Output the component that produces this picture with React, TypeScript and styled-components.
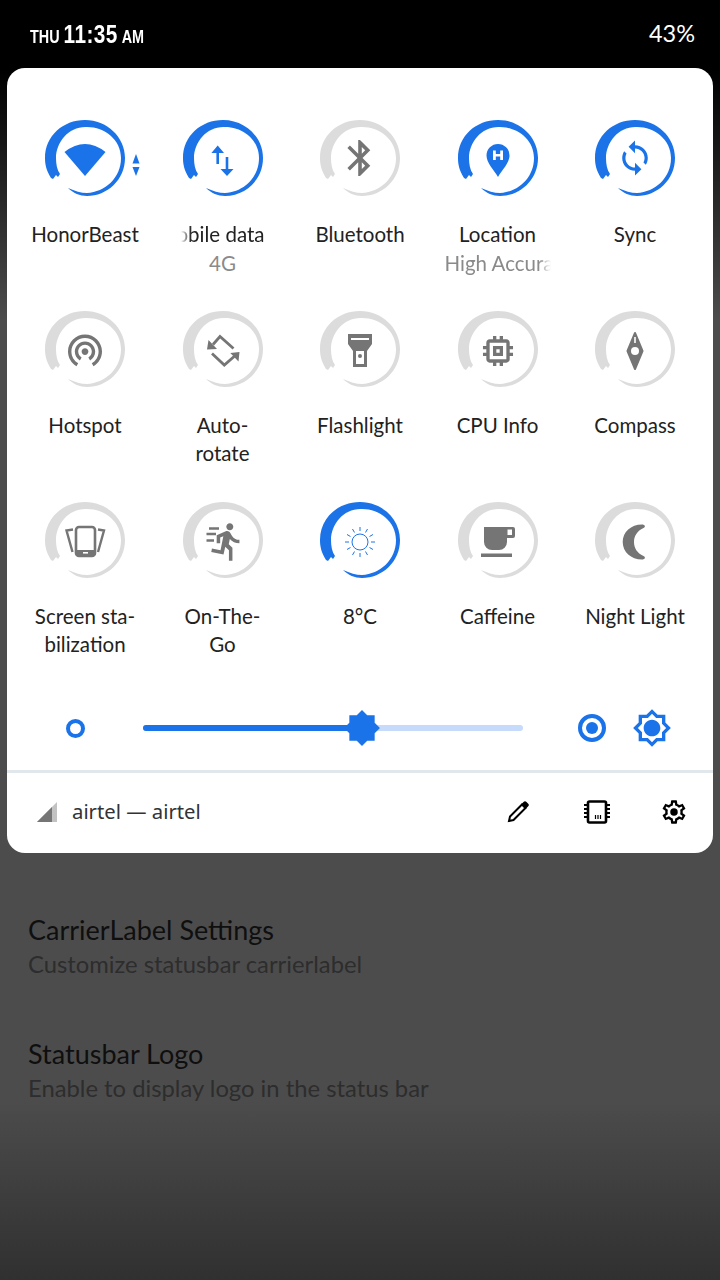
import React from 'react'
import styled, { createGlobalStyle } from 'styled-components'

const BLUE = '#1a73e8'
const GREY = '#757575'
const RING_OFF = '#dcdcdc'

const GlobalStyle = createGlobalStyle`
  html, body {
    margin: 0;
    padding: 0;
    background: #000;
  }
`

const Screen = styled.div`
  width: 720px;
  height: 1280px;
  overflow: hidden;
  display: flex;
  flex-direction: column;
  font-family: Lato, "Open Sans", sans-serif;
  background: linear-gradient(
    to bottom,
    #000 0,
    #000 70px,
    #4c4c4c 320px,
    #4c4c4c 1100px,
    #303030 1280px
  );
`

const StatusBar = styled.div`
  height: 68px;
  flex: none;
  display: flex;
  align-items: center;
  justify-content: space-between;
  padding: 0 25px 0 30px;
  box-sizing: border-box;
  color: #fff;
`

const Clock = styled.div`
  display: flex;
  align-items: baseline;
  gap: 5px;
  font-family: "Liberation Sans", sans-serif;
  font-weight: 700;
  font-size: 18px;
  transform: scaleX(0.8);
  transform-origin: left center;
`

const ClockTime = styled.span`
  font-size: 26px;
  letter-spacing: 0.5px;
`

const Battery = styled.div`
  font-size: 23.5px;
  font-weight: 400;
  margin-top: -3px;
`

const Panel = styled.div`
  flex: none;
  margin: 0 7px;
  height: 785px;
  background: #fff;
  border-radius: 18px;
  display: flex;
  flex-direction: column;
`

const TileGrid = styled.div`
  display: grid;
  grid-template-columns: repeat(5, 137.5px);
  grid-auto-rows: 191px;
  padding: 52px 9.25px 0;
`

const Tile = styled.div`
  display: flex;
  flex-direction: column;
  align-items: center;
`

const RingSvg = styled.svg`
  width: 80px;
  height: 76px;
  flex: none;
  overflow: visible;
  margin-bottom: 24px;
`

const Label = styled.div`
  font-size: 20.5px;
  line-height: 28px;
  color: #222;
  text-align: center;
  white-space: nowrap;
`

const SubLabel = styled(Label)`
  color: #8a8a8a;
  margin-top: 1px;
`

const Clipped = styled.div<{ $side: 'left' | 'right'; $width: number }>`
  width: ${p => p.$width}px;
  overflow: hidden;
  display: flex;
  flex: none;
  justify-content: ${p => (p.$side === 'left' ? 'flex-end' : 'flex-start')};
  -webkit-mask-image: linear-gradient(
    to ${p => p.$side},
    #000 88%,
    transparent 100%
  );
  mask-image: linear-gradient(to ${p => p.$side}, #000 88%, transparent 100%);
`

const SliderRow = styled.div`
  display: flex;
  align-items: center;
  height: 70px;
  padding: 0 0 7px 59px;
`

const MinDot = styled.div`
  width: 19px;
  height: 19px;
  box-sizing: border-box;
  border: 4px solid ${BLUE};
  border-radius: 50%;
  flex: none;
`

const Track = styled.div`
  position: relative;
  width: 380px;
  height: 6px;
  margin: 0 55px 0 58px;
  border-radius: 3px;
  background: #c6dafc;
  flex: none;
`

const TrackFill = styled.div`
  height: 100%;
  border-radius: 3px;
  background: ${BLUE};
`

const Thumb = styled.svg`
  position: absolute;
  top: -16px;
  width: 38px;
  height: 38px;
  margin-left: -19px;
`

const SliderIcon = styled.svg<{ $size: number; $gap?: number }>`
  width: ${p => p.$size}px;
  height: ${p => p.$size}px;
  margin-left: ${p => p.$gap ?? 0}px;
  flex: none;
`

const Divider = styled.div`
  height: 3px;
  background: #e2e7eb;
  flex: none;
`

const Footer = styled.div`
  flex: 1;
  display: flex;
  align-items: center;
  padding: 0 25px 2px 30px;
`

const Carrier = styled.span`
  margin-left: 15px;
  padding-bottom: 3px;
  font-family: "Noto Sans", sans-serif;
  font-size: 20.3px;
  color: #333;
`

const FooterActions = styled.div`
  margin-left: auto;
  display: flex;
  align-items: center;
  gap: 50px;
`

const PencilSvg = styled.svg`
  width: 22px;
  height: 22px;
  margin-right: 5px;
`

const Backdrop = styled.div`
  padding: 59px 28px 0;
  display: flex;
  flex-direction: column;
  gap: 54px;
`

const Pref = styled.div`
  display: flex;
  flex-direction: column;
`

const PrefTitle = styled.div`
  font-size: 27px;
  line-height: 35px;
  color: #0f0f0f;
`

const PrefSummary = styled.div`
  font-size: 23.8px;
  line-height: 35px;
  color: #2d2d2d;
`

const HiddenDefs = styled.svg`
  width: 0;
  height: 0;
  flex: none;
`

const BrushRing = ({ color }: { color: string }) => (
  <g filter="url(#brush)">
    <path
      fill={color}
      d="M6 58C1 50 0 44 0 38C0 16 18 0 40 0C62 0 80 17 80 38C80 60 62 76 42 76C35 76 28 73 23 68C30 71 36 73 42 73C60 72 76 58 76 38C76 20 60 7 42 7C24 6 11 22 11 38C11 44 12 50 15 54L13 57L11 55L8 59Z"
    />
  </g>
)

// material glyph on a 24 unit box, centred in the ring
const Glyph = ({
  d,
  scale,
  color = GREY,
  cx = 12,
  cy = 12,
  x = 40,
  y = 40,
}: {
  d: string
  scale: number
  color?: string
  cx?: number
  cy?: number
  x?: number
  y?: number
}) => (
  <path
    d={d}
    fill={color}
    transform={`translate(${x} ${y}) scale(${scale}) translate(${-cx} ${-cy})`}
  />
)

const WifiIcon = () => (
  <>
    <path fill={BLUE} d="M19.5 32Q40 16 60.5 32L40 56Z" />
    <path fill={BLUE} d="M91 34L94.5 43.5H87.5ZM87.5 47H94.5L91 56Z" />
  </>
)

const DataIcon = () => (
  <g stroke={BLUE} strokeWidth="2.6" fill="none">
    <path d="M34.7 28V44" />
    <path d="M44 37V53" />
    <path fill={BLUE} stroke="none" d="M34.7 25.5L41 33H28.4ZM44 56L50.5 49H37.5Z" />
  </g>
)

const BluetoothIcon = () => (
  <Glyph
    scale={1.8}
    y={38}
    d="M17.71 7.71L12 2h-1v7.59L6.41 5 5 6.41 10.59 12 5 17.59 6.41 19 11 14.41V22h1l5.71-5.71-4.3-4.29 4.3-4.29zM13 5.83l1.88 1.88L13 9.59V5.83zm1.88 10.46L13 18.17v-3.76l1.88 1.88z"
  />
)

const LocationIcon = () => (
  <>
    <path
      fill={BLUE}
      d="M40 57C36 50 28.5 43 28.5 35.5A11.5 11.5 0 0 1 51.5 35.5C51.5 43 44 50 40 57Z"
    />
    <path fill="#fff" d="M35 30.5H37.8V34H42.2V30.5H45V40H42.2V36.5H37.8V40H35Z" />
  </>
)

const SyncIcon = () => (
  <Glyph
    scale={1.6}
    color={BLUE}
    y={38}
    d="M12 4V1L8 5l4 4V6c3.31 0 6 2.69 6 6 0 1.01-.25 1.97-.7 2.8l1.46 1.46C19.54 15.03 20 13.57 20 12c0-4.42-3.58-8-8-8zm0 14c-3.31 0-6-2.69-6-6 0-1.01.25-1.97.7-2.8L5.24 7.74C4.46 8.97 4 10.43 4 12c0 4.42 3.58 8 8 8v3l4-4-4-4v3z"
  />
)

const HotspotIcon = () => (
  <Glyph
    scale={1.7}
    cy={12.3}
    y={39.4}
    d="M12 11c-1.1 0-2 .9-2 2s.9 2 2 2 2-.9 2-2-.9-2-2-2zm6 2c0-3.31-2.69-6-6-6s-6 2.69-6 6c0 2.22 1.21 4.15 3 5.19l1-1.74c-1.19-.7-2-1.97-2-3.45 0-2.21 1.79-4 4-4s4 1.79 4 4c0 1.48-.81 2.75-2 3.45l1 1.74c1.79-1.04 3-2.97 3-5.19zM12 3C6.48 3 2 7.48 2 13c0 3.7 2.01 6.92 4.99 8.65l1-1.73C5.61 18.53 4 15.96 4 13c0-4.42 3.58-8 8-8s8 3.58 8 8c0 2.96-1.61 5.53-4 6.92l1 1.73c2.99-1.73 5-4.95 5-8.65 0-5.52-4.48-10-10-10z"
  />
)

const RotateIcon = () => (
  <>
    <path fill="none" stroke={GREY} strokeWidth="2.8" d="M30 33.5L37 25.5L50.5 37.5" />
    <path fill="none" stroke={GREY} strokeWidth="2.8" d="M29 42.5L41.3 54L54 43" />
    <path fill={GREY} d="M24 38.5L25.5 29L34 38ZM56.5 41L55.5 50.5L47.3 42Z" />
  </>
)

const FlashlightIcon = () => (
  <path
    fill={GREY}
    fillRule="evenodd"
    d="M28 23H52V33L47 40V56H33V40L28 33ZM31 27V29H49V27ZM36 40V53H44V40ZM38 45a2 2 0 1 0 4 0a2 2 0 1 0 -4 0Z"
  />
)

const CpuIcon = () => (
  <Glyph
    scale={1.67}
    d="M15 9H9v6h6V9zm-2 4h-2v-2h2v2zm8-2V9h-2V7c0-1.1-.9-2-2-2h-2V3h-2v2h-2V3H9v2H7c-1.1 0-2 .9-2 2v2H3v2h2v2H3v2h2v2c0 1.1.9 2 2 2h2v2h2v-2h2v2h2v-2h2c1.1 0 2-.9 2-2v-2h2v-2h-2v-2h2zm-4 6H7V7h10v10z"
  />
)

const CompassIcon = () => (
  <>
    <path
      fill={GREY}
      stroke={GREY}
      strokeWidth="2"
      strokeLinejoin="round"
      d="M40 22L47.5 40L40 58L32.5 40Z"
    />
    <circle cx="40" cy="40" r="4" fill="#fff" />
    <path stroke="#fff" strokeWidth="1.6" d="M40 26V32" />
  </>
)

const StabilizeIcon = () => (
  <>
    <rect x="31" y="25" width="19" height="29" rx="3" fill="none" stroke={GREY} strokeWidth="2.6" />
    <rect x="31" y="48" width="19" height="6" fill={GREY} />
    <rect x="38" y="50" width="5" height="1.6" fill="#fff" />
    <path
      fill="none"
      stroke={GREY}
      strokeWidth="2.4"
      d="M28 27.5L21.5 28.5L27.5 50M53 27.5L59 28.5L53 50"
    />
  </>
)

const RunIcon = () => (
  <>
    <Glyph
      scale={1.75}
      cx={11.6}
      cy={12.2}
      x={43.5}
      y={40}
      d="M13.49 5.48c1.1 0 2-.9 2-2s-.9-2-2-2-2 .9-2 2 .9 2 2 2zm-3.6 13.9l1-4.4 2.1 2v6h2v-7.5l-2.1-2 .6-3c1.3 1.5 3.3 2.5 5.5 2.5v-2c-1.9 0-3.5-1-4.3-2.4l-1-1.6c-.4-.6-1-1-1.7-1-.3 0-.5.1-.8.1l-5.2 2.2v4.7h2v-3.4l1.8-.7-1.6 8.1-4.9-1-.4 2 7 1.4z"
    />
    <path stroke={GREY} strokeWidth="2.4" d="M26 26.5H36M23.5 32H33M23.5 38.5H31" />
  </>
)

const SunIcon = () => (
  <g stroke={BLUE} strokeWidth="1" fill="none">
    <circle cx="40" cy="40" r="8" />
    {Array.from({ length: 12 }, (_, i) => {
      const a = (i * Math.PI) / 6
      return (
        <line
          key={i}
          x1={40 + Math.cos(a) * 11}
          y1={40 + Math.sin(a) * 11}
          x2={40 + Math.cos(a) * 15}
          y2={40 + Math.sin(a) * 15}
        />
      )
    })}
  </g>
)

const CoffeeIcon = () => (
  <path
    fill={GREY}
    fillRule="evenodd"
    d="M26 25H55A2 2 0 0 1 57 27V34A2 2 0 0 1 55 36H49V40A8 8 0 0 1 41 48H34A8 8 0 0 1 26 40ZM49.5 27.5V33H54V27.5ZM23 51.5H54V55H23Z"
  />
)

const MoonIcon = () => (
  <path
    fill={GREY}
    d="M47 22.5C50 22.5 51 25 48.5 26C42 29 39 34 39 40C39 46 42 51 48.5 54C51 55 50 57.5 47 57.5C36 57.5 27.7 50 27.7 40C27.7 30 36 22.5 47 22.5Z"
  />
)

type TileData = {
  id: string
  on: boolean
  icon: React.ReactNode
  lines: string[]
  clipWidth?: number
  sub?: string
  subClipWidth?: number
}

const tiles: TileData[] = [
  { id: 'wifi', on: true, icon: <WifiIcon />, lines: ['HonorBeast'] },
  { id: 'data', on: true, icon: <DataIcon />, lines: ['Mobile data'], clipWidth: 84, sub: '4G' },
  { id: 'bt', on: false, icon: <BluetoothIcon />, lines: ['Bluetooth'] },
  { id: 'loc', on: true, icon: <LocationIcon />, lines: ['Location'], sub: 'High Accuracy', subClipWidth: 106 },
  { id: 'sync', on: true, icon: <SyncIcon />, lines: ['Sync'] },
  { id: 'hotspot', on: false, icon: <HotspotIcon />, lines: ['Hotspot'] },
  { id: 'rotate', on: false, icon: <RotateIcon />, lines: ['Auto-', 'rotate'] },
  { id: 'flash', on: false, icon: <FlashlightIcon />, lines: ['Flashlight'] },
  { id: 'cpu', on: false, icon: <CpuIcon />, lines: ['CPU Info'] },
  { id: 'compass', on: false, icon: <CompassIcon />, lines: ['Compass'] },
  { id: 'stab', on: false, icon: <StabilizeIcon />, lines: ['Screen sta-', 'bilization'] },
  { id: 'otg', on: false, icon: <RunIcon />, lines: ['On-The-', 'Go'] },
  { id: 'temp', on: true, icon: <SunIcon />, lines: ['8°C'] },
  { id: 'caffeine', on: false, icon: <CoffeeIcon />, lines: ['Caffeine'] },
  { id: 'night', on: false, icon: <MoonIcon />, lines: ['Night Light'] },
]

const STAR =
  'M20 8.69V4h-4.69L12 .69 8.69 4H4v4.69L.69 12 4 15.31V20h4.69L12 23.31 15.31 20H20v-4.69L23.31 12 20 8.69z'

const GEAR =
  'M19.43 12.98c.04-.32.07-.64.07-.98 0-.34-.03-.66-.07-.98l2.11-1.65c.19-.15.24-.42.12-.64l-2-3.46c-.09-.16-.26-.25-.44-.25-.06 0-.12.01-.17.03l-2.49 1c-.52-.4-1.08-.73-1.69-.98l-.38-2.65C14.46 2.18 14.25 2 14 2h-4c-.25 0-.46.18-.49.42l-.38 2.65c-.61.25-1.17.59-1.69.98l-2.49-1c-.06-.02-.12-.03-.18-.03-.17 0-.34.09-.43.25l-2 3.46c-.13.22-.07.49.12.64l2.11 1.65c-.04.32-.07.65-.07.98 0 .33.03.66.07.98l-2.11 1.65c-.19.15-.24.42-.12.64l2 3.46c.09.16.26.25.44.25.06 0 .12-.01.17-.03l2.49-1c.52.4 1.08.73 1.69.98l.38 2.65c.03.24.24.42.49.42h4c.25 0 .46-.18.49-.42l.38-2.65c.61-.25 1.17-.59 1.69-.98l2.49 1c.06.02.12.03.18.03.17 0 .34-.09.43-.25l2-3.46c.12-.22.07-.49-.12-.64l-2.11-1.65zm-1.98-1.71c.04.31.05.52.05.73 0 .21-.02.43-.05.73l-.14 1.13.89.7 1.08.84-.7 1.21-1.27-.51-1.04-.42-.9.68c-.43.32-.84.56-1.25.73l-1.06.43-.16 1.13-.2 1.35h-1.4l-.19-1.35-.16-1.13-1.06-.43c-.43-.18-.83-.41-1.23-.71l-.91-.7-1.06.43-1.27.51-.7-1.21 1.08-.84.89-.7-.14-1.13c-.03-.31-.05-.54-.05-.74s.02-.43.05-.73l.14-1.13-.89-.7-1.08-.84.7-1.21 1.27.51 1.04.42.9-.68c.43-.32.84-.56 1.25-.73l1.06-.43.16-1.13.2-1.35h1.39l.19 1.35.16 1.13 1.06.43c.43.18.83.41 1.23.71l.91.7 1.06-.43 1.27-.51.7 1.21-1.07.85-.89.7.14 1.13z'

const App: React.FC = () => {
  return (
    <Screen>
      <GlobalStyle />
      <HiddenDefs aria-hidden="true">
        <defs>
          <filter id="brush" x="-5%" y="-5%" width="110%" height="110%">
            <feTurbulence type="fractalNoise" baseFrequency="0.09" numOctaves="2" seed="4" />
            <feDisplacementMap in="SourceGraphic" scale="1.6" />
            <feGaussianBlur stdDeviation="0.25" />
          </filter>
        </defs>
      </HiddenDefs>

      <StatusBar>
        <Clock>
          <span>THU</span>
          <ClockTime>11:35</ClockTime>
          <span>AM</span>
        </Clock>
        <Battery>43%</Battery>
      </StatusBar>

      <Panel>
        <TileGrid>
          {tiles.map(t => (
            <Tile key={t.id}>
              <RingSvg viewBox="0 0 80 76">
                <BrushRing color={t.on ? BLUE : RING_OFF} />
                {t.icon}
              </RingSvg>
              {t.clipWidth ? (
                <Clipped $side="left" $width={t.clipWidth}>
                  <Label>{t.lines[0]}</Label>
                </Clipped>
              ) : (
                t.lines.map(line => <Label key={line}>{line}</Label>)
              )}
              {t.sub && t.subClipWidth && (
                <Clipped $side="right" $width={t.subClipWidth}>
                  <SubLabel>{t.sub}</SubLabel>
                </Clipped>
              )}
              {t.sub && !t.subClipWidth && <SubLabel>{t.sub}</SubLabel>}
            </Tile>
          ))}
        </TileGrid>

        <SliderRow>
          <MinDot />
          <Track>
            <TrackFill style={{ width: `${((360 - 143) / 380) * 100}%` }} />
            <Thumb viewBox="0 0 24 24" style={{ left: `${((362 - 143) / 380) * 100}%` }}>
              <path fill={BLUE} d={STAR} />
            </Thumb>
          </Track>
          <SliderIcon $size={28} viewBox="0 0 28 28">
            <circle cx="14" cy="14" r="12" fill="none" stroke={BLUE} strokeWidth="4" />
            <circle cx="14" cy="14" r="6" fill={BLUE} />
          </SliderIcon>
          <SliderIcon $size={40} $gap={26} viewBox="0 0 24 24">
            <path
              fill={BLUE}
              d={`${STAR}m-2 5.79V18h-3.52L12 20.48 9.52 18H6v-3.52L3.52 12 6 9.52V6h3.52L12 3.52 14.48 6H18v3.52L20.48 12 18 14.48zM12 7c-2.76 0-5 2.24-5 5s2.24 5 5 5 5-2.24 5-5-2.24-5-5-5z`}
            />
          </SliderIcon>
        </SliderRow>

        <Divider />

        <Footer>
          <svg width="20" height="20" viewBox="0 0 20 20">
            <path fill="#c2c2c2" d="M20 0V20H0Z" />
            <path fill={GREY} d="M15 5V20H0Z" />
          </svg>
          <Carrier>airtel — airtel</Carrier>
          <FooterActions>
            <PencilSvg viewBox="0 0 22 22">
              <path fill="none" stroke="#000" strokeWidth="2" d="M2 20L3 15.5L15 3.5L18.5 7L6.5 19Z" />
              <path fill="#000" d="M14 3.5L16.5 1A2 2 0 0 1 19.5 1L21 2.5A2 2 0 0 1 21 5.5L18.5 8Z" />
            </PencilSvg>
            <svg width="26" height="24" viewBox="0 0 26 24">
              <rect x="4" y="1.5" width="18" height="21" rx="1.5" fill="none" stroke="#000" strokeWidth="2.6" />
              <path
                stroke="#000"
                strokeWidth="2"
                d="M0 5H4M0 9H4M0 13H4M0 17H4M22 5H26M22 9H26M22 13H26M22 17H26"
              />
              <path stroke="#000" strokeWidth="1.2" d="M11.5 15V19M14 15V19M16.5 15V19" />
            </svg>
            <svg width="28" height="28" viewBox="0 0 24 24">
              <path fill="#000" d={GEAR} />
              <circle cx="12" cy="12" r="3.2" fill="#000" />
            </svg>
          </FooterActions>
        </Footer>
      </Panel>

      <Backdrop>
        <Pref>
          <PrefTitle>CarrierLabel Settings</PrefTitle>
          <PrefSummary>Customize statusbar carrierlabel</PrefSummary>
        </Pref>
        <Pref>
          <PrefTitle>Statusbar Logo</PrefTitle>
          <PrefSummary>Enable to display logo in the status bar</PrefSummary>
        </Pref>
      </Backdrop>
    </Screen>
  )
}

export default App
